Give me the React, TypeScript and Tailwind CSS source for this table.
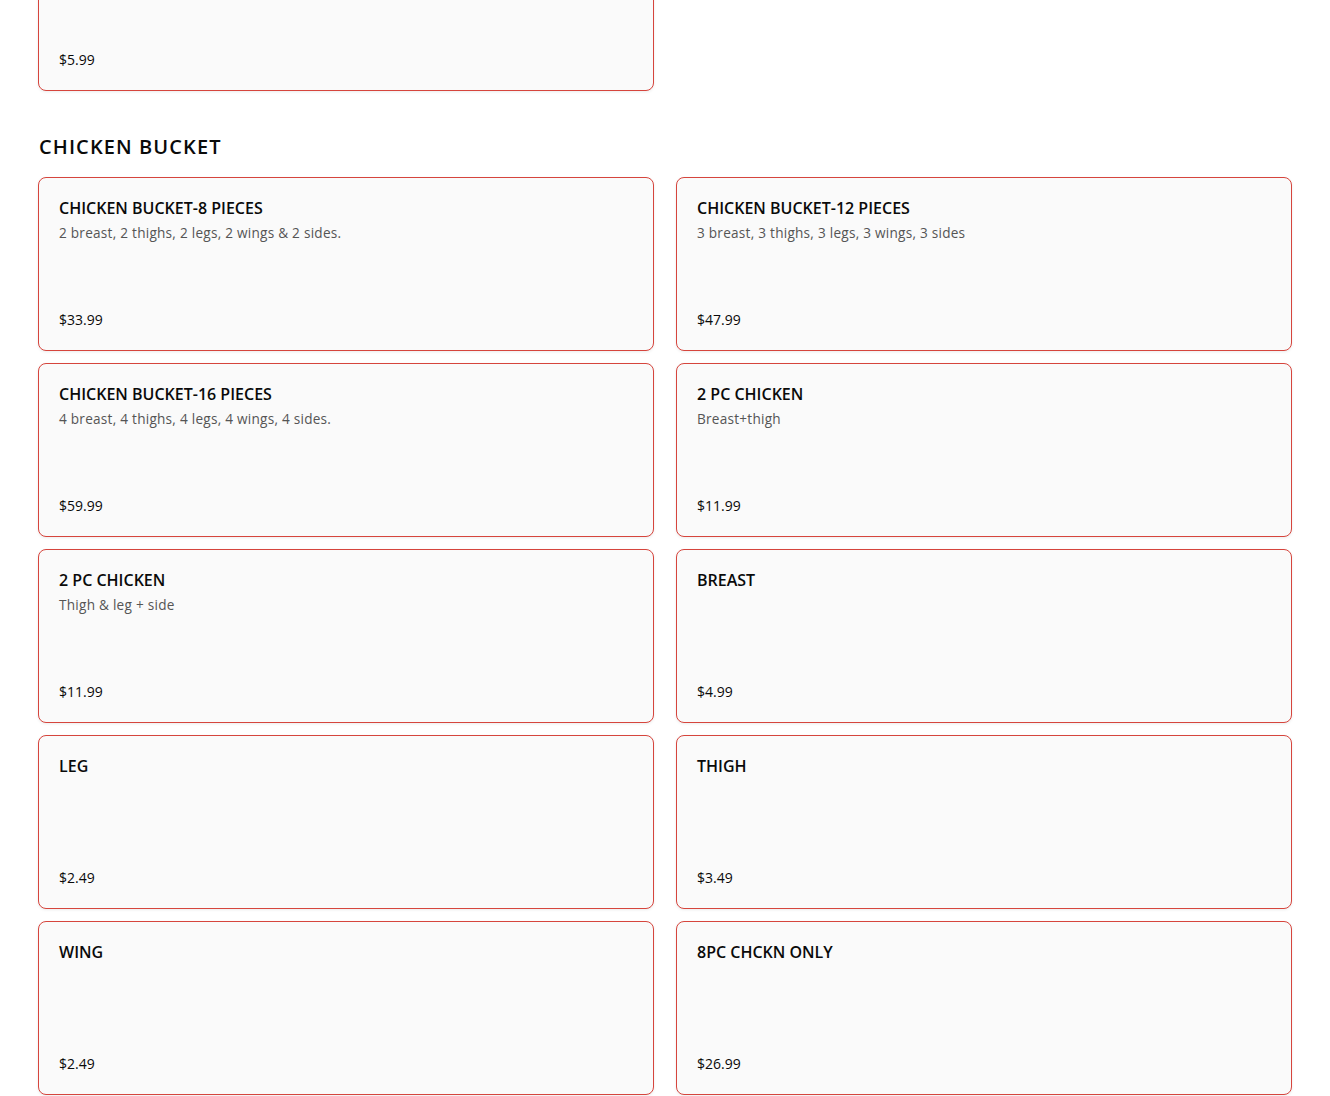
import React from 'react';

type Item = { name: string; desc?: string; price: string };

const items: Item[] = [
  { name: 'CHICKEN BUCKET-8 PIECES', desc: '2 breast, 2 thighs, 2 legs, 2 wings & 2 sides.', price: '$33.99' },
  { name: 'CHICKEN BUCKET-12 PIECES', desc: '3 breast, 3 thighs, 3 legs, 3 wings, 3 sides', price: '$47.99' },
  { name: 'CHICKEN BUCKET-16 PIECES', desc: '4 breast, 4 thighs, 4 legs, 4 wings, 4 sides.', price: '$59.99' },
  { name: '2 PC CHICKEN', desc: 'Breast+thigh', price: '$11.99' },
  { name: '2 PC CHICKEN', desc: 'Thigh & leg + side', price: '$11.99' },
  { name: 'BREAST', price: '$4.99' },
  { name: 'LEG', price: '$2.49' },
  { name: 'THIGH', price: '$3.49' },
  { name: 'WING', price: '$2.49' },
  { name: '8PC CHCKN ONLY', price: '$26.99' },
];

const Card: React.FC<{ item: Item }> = ({ item }) => (
  <div className="flex flex-col h-[174px] bg-[#fafafa] border border-[#d6453d] rounded-[8px] shadow-[0_1px_3px_rgba(0,0,0,0.08)] px-[20px] pt-[18px] pb-[20px]">
    <h3 className="text-[16px] leading-[24px] font-semibold text-[#0a0a0a]">{item.name}</h3>
    {item.desc && <p className="text-[13.6px] leading-[20px] text-[#555] mt-[3px] tracking-[0.25px]">{item.desc}</p>}
    <p className="mt-auto text-[14px] leading-[20px] text-[#0a0a0a]">{item.price}</p>
  </div>
);

const App: React.FC = () => {
  return (
    <div className="w-full bg-white px-[38px] pb-[40px] overflow-hidden h-[1096px]" style={{ fontFamily: '"Open Sans", "Liberation Sans", sans-serif' }}>
      <div className="mt-[-83px] grid grid-cols-2 gap-x-[22px]">
        <Card item={{ name: '', price: '$5.99' }} />
      </div>
      <h2 className="mt-[42px] mb-[16px] text-[20px] leading-[28px] font-semibold tracking-[1.1px] text-[#0a0a0a] pl-[1px]">
        CHICKEN BUCKET
      </h2>
      <div className="grid grid-cols-2 gap-x-[22px] gap-y-[12px]">
        {items.map((it, i) => (
          <Card key={i} item={it} />
        ))}
      </div>
    </div>
  );
};

export default App;
